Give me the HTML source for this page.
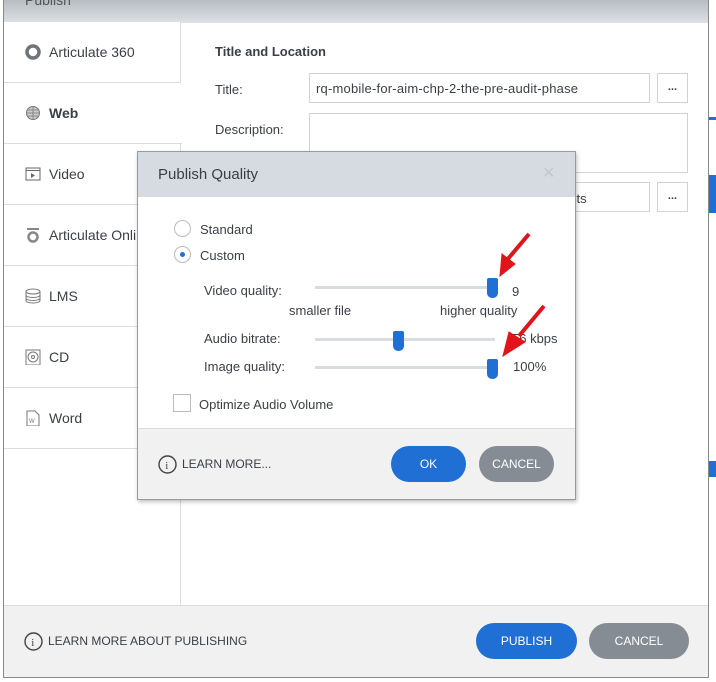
<!DOCTYPE html>
<html><head><style>
*{box-sizing:border-box;margin:0;padding:0}
body{width:716px;height:682px;overflow:hidden;background:#fff;font-family:"Liberation Sans",sans-serif;position:relative;color:#3c4043}
.a{position:absolute}
.t{font-size:13px;color:#3a3f45}
.side{left:4px;width:177px;height:61px;border-bottom:1px solid #d8dde2;border-right:1px solid #d8dde2;background:#fff}
.side span{position:absolute;left:45px;top:22px;font-size:14px;color:#3a3f45}
.ic{position:absolute;left:21px;top:22px;width:16px;height:16px}
.inp{border:1px solid #cdd3d9;background:#fff}
.btn{border-radius:18px;color:#fff;font-size:13px;text-align:center;line-height:36px}
.track{height:3px;background:#d9dde1}
.thumb{width:11px;height:20px;background:#1f6fd4;border-radius:2px 2px 5px 5px}
</style></head><body>
<div class="a" style="left:708px;top:0;width:8px;height:682px;background:#fff"></div>
<div class="a" style="left:709px;top:117px;width:7px;height:3px;background:#1f6fd4"></div>
<div class="a" style="left:709px;top:175px;width:7px;height:38px;background:#1f6fd4"></div>
<div class="a" style="left:709px;top:461px;width:7px;height:16px;background:#1f6fd4"></div>
<div class="a" style="left:3px;top:0;width:706px;height:678px;border:1px solid #888;background:#fff"></div>
<div class="a" style="left:4px;top:0;width:704px;height:23px;background:linear-gradient(#b8bdc2,#dde1e5)"></div>
<div class="a" style="left:25px;top:-8px;font-size:14px;color:#555">Publish</div>
<div class="a side" style="top:22px"><svg class="ic" viewBox="0 0 16 16"><circle cx="8" cy="8" r="6" fill="none" stroke="#6f747a" stroke-width="3.5"/></svg><span>Articulate 360</span></div>
<div class="a side" style="top:83px;border-right:none;width:178px"><svg class="ic" viewBox="0 0 16 16"><circle cx="8" cy="8" r="6.5" fill="#ccc" stroke="#777"/><path d="M1.5 8h13M8 1.5v13M3 5h10M3 11h10" stroke="#888" fill="none"/></svg><span style="font-weight:bold">Web</span></div>
<div class="a side" style="top:144px"><svg class="ic" viewBox="0 0 16 16"><rect x="1" y="2" width="14" height="12" fill="none" stroke="#666"/><path d="M1 4.5h14" stroke="#666"/><path d="M6 7l4 2.5-4 2.5z" fill="#666"/></svg><span>Video</span></div>
<div class="a side" style="top:205px"><svg class="ic" viewBox="0 0 16 16"><path d="M2 2h12" stroke="#888" stroke-width="2"/><circle cx="8" cy="10" r="4.5" fill="none" stroke="#888" stroke-width="2.5"/></svg><span>Articulate Onli</span></div>
<div class="a side" style="top:266px"><svg class="ic" viewBox="0 0 16 16"><ellipse cx="8" cy="3.5" rx="7" ry="2.5" fill="none" stroke="#777"/><path d="M1 3.5v9c0 1.5 3 2.5 7 2.5s7-1 7-2.5v-9M1 7c0 1.5 3 2.5 7 2.5s7-1 7-2.5M1 10c0 1.5 3 2.5 7 2.5s7-1 7-2.5" fill="none" stroke="#777"/></svg><span>LMS</span></div>
<div class="a side" style="top:327px"><svg class="ic" viewBox="0 0 16 16"><rect x="1" y="1" width="14" height="15" fill="none" stroke="#777"/><circle cx="8" cy="8" r="5" fill="none" stroke="#777"/><circle cx="8" cy="8" r="1.5" fill="none" stroke="#777"/></svg><span>CD</span></div>
<div class="a side" style="top:388px"><svg class="ic" viewBox="0 0 16 16"><path d="M2 1h8l4 4v11H2z" fill="none" stroke="#777"/><text x="4" y="13" font-size="6" fill="#777" font-family="Liberation Sans">W</text></svg><span>Word</span></div>
<div class="a" style="left:180px;top:449px;width:1px;height:156px;background:#d8dde2"></div>
<div class="a" style="left:215px;top:44px;font-size:13px;font-weight:bold;color:#3a3f45">Title and Location</div>
<div class="a t" style="left:215px;top:82px">Title:</div>
<div class="a inp" style="left:309px;top:73px;width:341px;height:30px"></div>
<div class="a t" style="left:316px;top:81px;letter-spacing:0.2px">rq-mobile-for-aim-chp-2-the-pre-audit-phase</div>
<div class="a inp" style="left:657px;top:73px;width:31px;height:30px;text-align:center;font-size:11px;line-height:26px;font-weight:bold">...</div>
<div class="a t" style="left:215px;top:122px">Description:</div>
<div class="a inp" style="left:309px;top:113px;width:379px;height:60px"></div>
<div class="a inp" style="left:309px;top:182px;width:341px;height:30px"></div>
<div class="a t" style="left:570px;top:191px">cts</div>
<div class="a inp" style="left:657px;top:182px;width:31px;height:30px;text-align:center;font-size:11px;line-height:26px;font-weight:bold">...</div>
<div class="a" style="left:4px;top:605px;width:704px;height:72px;background:#f1f1f1;border-top:1px solid #d8dde2"></div>
<svg class="a" style="left:24px;top:632px" width="19" height="19" viewBox="0 0 19 19"><circle cx="9.5" cy="9.5" r="8.5" fill="none" stroke="#444" stroke-width="1.4"/><text x="7.3" y="14" font-size="11" fill="#444" font-family="Liberation Serif">i</text></svg>
<div class="a t" style="left:48px;top:634px;font-size:12px">LEARN MORE ABOUT PUBLISHING</div>
<div class="a btn" style="left:476px;top:623px;width:101px;background:#1f6fd4;font-size:12px">PUBLISH</div>
<div class="a btn" style="left:589px;top:623px;width:100px;background:#858c94;font-size:12px">CANCEL</div>
<div class="a" style="left:137px;top:151px;width:439px;height:349px;border:1px solid #999;background:#fff;box-shadow:1px 2px 4px rgba(0,0,0,.25)"></div>
<div class="a" style="left:138px;top:152px;width:437px;height:45px;background:#d5dbe1"></div>
<div class="a" style="left:158px;top:166px;font-size:15px;color:#3a3f45">Publish Quality</div>
<div class="a" style="left:542px;top:163px;font-size:16px;color:#c4c8cc">✕</div>
<div class="a" style="left:174px;top:220px;width:17px;height:17px;border:1px solid #bbb;border-radius:50%"></div>
<div class="a t" style="left:200px;top:222px">Standard</div>
<div class="a" style="left:174px;top:246px;width:17px;height:17px;border:1px solid #bbb;border-radius:50%"></div>
<div class="a" style="left:180px;top:252px;width:5px;height:5px;background:#1f6fd4;border-radius:50%"></div>
<div class="a t" style="left:200px;top:248px">Custom</div>
<div class="a t" style="left:204px;top:283px">Video quality:</div>
<div class="a track" style="left:315px;top:286px;width:180px"></div>
<div class="a thumb" style="left:487px;top:278px"></div>
<div class="a t" style="left:512px;top:284px">9</div>
<div class="a t" style="left:289px;top:303px">smaller file</div>
<div class="a t" style="left:440px;top:303px">higher quality</div>
<div class="a t" style="left:204px;top:331px">Audio bitrate:</div>
<div class="a track" style="left:315px;top:338px;width:180px"></div>
<div class="a thumb" style="left:393px;top:331px"></div>
<div class="a t" style="left:512px;top:331px">56 kbps</div>
<div class="a t" style="left:204px;top:359px">Image quality:</div>
<div class="a track" style="left:315px;top:366px;width:180px"></div>
<div class="a thumb" style="left:487px;top:359px"></div>
<div class="a t" style="left:513px;top:359px">100%</div>
<div class="a" style="left:173px;top:394px;width:18px;height:18px;border:1px solid #bbb"></div>
<div class="a t" style="left:199px;top:397px">Optimize Audio Volume</div>
<div class="a" style="left:138px;top:428px;width:437px;height:71px;background:#f1f1f1;border-top:1px solid #d8dde2"></div>
<svg class="a" style="left:158px;top:455px" width="19" height="19" viewBox="0 0 19 19"><circle cx="9.5" cy="9.5" r="8.5" fill="none" stroke="#444" stroke-width="1.4"/><text x="7.3" y="14" font-size="11" fill="#444" font-family="Liberation Serif">i</text></svg>
<div class="a t" style="left:182px;top:457px;font-size:12px">LEARN MORE...</div>
<div class="a btn" style="left:391px;top:446px;width:75px;background:#1f6fd4;font-size:12px">OK</div>
<div class="a btn" style="left:479px;top:446px;width:75px;background:#858c94;font-size:12px">CANCEL</div>
<svg class="a" style="left:0;top:0" width="716" height="682"><g stroke="#e0151b" stroke-width="4" fill="#e0151b"><line x1="529" y1="234" x2="507" y2="260"/><path d="M500 276l2-22 13 10z" stroke-width="1"/><line x1="544" y1="306" x2="519" y2="336"/><path d="M503 356l6-24 16 10z" stroke-width="1"/></g></svg>
</body></html>
